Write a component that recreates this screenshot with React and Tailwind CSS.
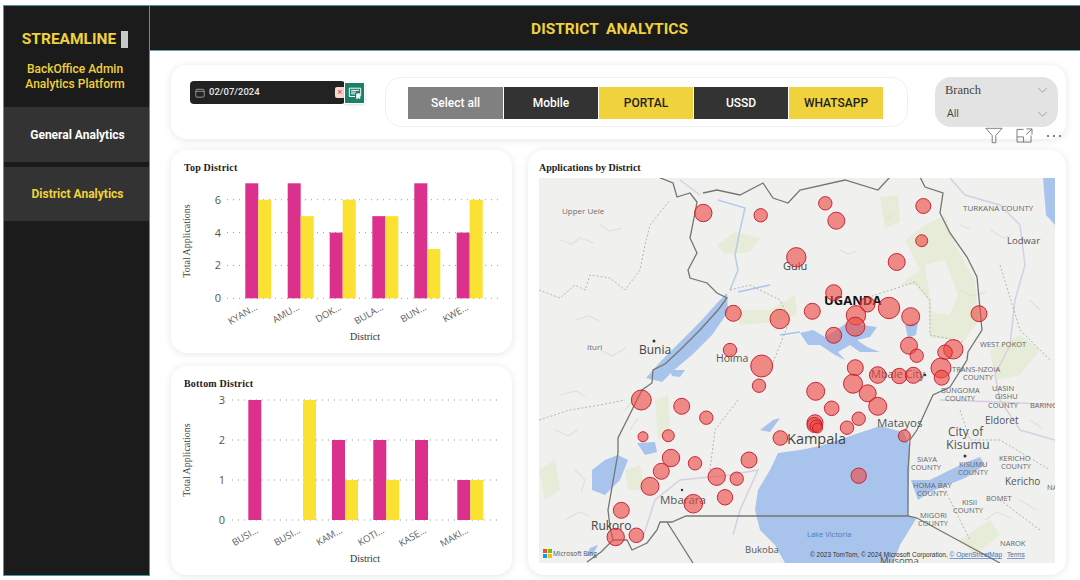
import React from 'react';

const bubbles = [
    [703.3, 213, 8.7], [760.7, 215.3, 6.7], [796.3, 257.3, 9.7], [733.3, 313.3, 8], [779.7, 319, 9.7],
    [730, 350, 6.7], [761.7, 366, 11], [825.3, 203.3, 6.7], [836.3, 220.7, 8.5], [923.3, 206, 7.5],
    [921.7, 240.7, 6], [896.7, 262, 8.5], [833.7, 292.7, 8], [812.3, 311.3, 8], [867.5, 304.5, 7.5],
    [889, 308, 10.7], [856, 315.3, 9.7], [855.3, 326.7, 9.5], [910.7, 316.7, 9], [833.7, 335.3, 8],
    [979, 313.7, 8], [909, 345.7, 8.5], [916.7, 355.7, 6.7], [953.3, 349.3, 9.7], [945, 352.3, 7.3],
    [941, 368, 10], [941.7, 377.7, 7.5], [855.3, 367.7, 8], [877.7, 375, 8.3], [899.3, 376, 7.7],
    [913.3, 375.3, 8], [853, 383.7, 9.5], [867.7, 393.3, 8.5], [877.7, 406.3, 9], [815.7, 391.3, 9],
    [831.7, 408.3, 7.3], [858.7, 418.7, 6.7], [847, 427.7, 6.7], [904.3, 436, 6], [815, 422.7, 8],
    [814.5, 425, 7.5], [816, 426, 6], [817.5, 428, 5], [780.3, 438, 7.3], [706.3, 417.7, 6.7],
    [759, 385.7, 6.7], [641.3, 400, 10], [681.7, 406.3, 8], [643, 436.7, 5], [668.3, 435.7, 6],
    [671, 458, 8.7], [661.3, 471.3, 8], [695, 463.3, 6.7], [650, 486.3, 9], [749, 460, 8],
    [716.7, 476.7, 8.7], [736.7, 478.7, 6.7], [725, 497.3, 7.7], [693.3, 503.7, 9.3], [621.3, 510.3, 8],
    [615.7, 537, 8.7], [636.3, 535.3, 7.3], [858.7, 475.7, 7.7],
];

// [x, baseline y, size, text, colour, weight]
const mapLabels = [
    [562, 214, 8, 'Upper Uele', '#6f6f6f'],
    [587, 350, 8, 'Ituri', '#6f6f6f'],
    [639, 354, 12, 'Bunia', '#444'],
    [716, 362, 10.5, 'Hoima', '#555'],
    [783, 270, 11, 'Gulu', '#444'],
    [824, 305, 13, 'UGANDA', '#111', 700],
    [871, 378, 11, 'Mbale City', '#555'],
    [787, 444, 14.5, 'Kampala', '#444'],
    [877, 427, 11.5, 'Matayos', '#555'],
    [591, 530, 12, 'Rukoro', '#444'],
    [660, 504, 11.5, 'Mbarara', '#555'],
    [745, 553, 9.5, 'Bukoba', '#555'],
    [807, 537, 7.5, 'Lake Victoria', '#4f78b5'],
    [880, 564, 9.5, 'Musoma', '#555'],
    [948, 436, 12, 'City of', '#555'],
    [946, 449, 12.5, 'Kisumu', '#555'],
    [985, 424, 10, 'Eldoret', '#555'],
    [963, 211, 8, 'TURKANA COUNTY', '#666'],
    [1007, 244, 9.5, 'Lodwar', '#555'],
    [980, 347, 7.5, 'WEST POKOT', '#666'],
    [952, 372, 7.5, 'TRANS-NZOIA', '#666'],
    [963, 380, 7.5, 'COUNTY', '#666'],
    [941, 393, 7.5, 'BUNGOMA', '#666'],
    [945, 401, 7.5, 'COUNTY', '#666'],
    [992, 391, 7.5, 'UASIN', '#666'],
    [995, 399, 7.5, 'GISHU', '#666'],
    [988, 408, 7.5, 'COUNTY', '#666'],
    [1030, 408, 7.5, 'BARINGO', '#666'],
    [917, 462, 7.5, 'SIAYA', '#666'],
    [911, 470, 7.5, 'COUNTY', '#666'],
    [959, 467, 7.5, 'KISUMU', '#666'],
    [958, 475, 7.5, 'COUNTY', '#666'],
    [999, 461, 7.5, 'KERICHO', '#666'],
    [1001, 469, 7.5, 'COUNTY', '#666'],
    [1005, 485, 10, 'Kericho', '#555'],
    [913, 488, 7.5, 'HOMA BAY', '#666'],
    [917, 496, 7.5, 'COUNTY', '#666'],
    [986, 501, 7.5, 'BOMET', '#666'],
    [962, 505, 7.5, 'KISII', '#666'],
    [953, 513, 7.5, 'COUNTY', '#666'],
    [920, 518, 7.5, 'MIGORI', '#666'],
    [918, 526, 7.5, 'COUNTY', '#666'],
    [1000, 546, 7.5, 'NAROK', '#666'],
    [1047, 490, 7.5, 'NA', '#666'],
];

const ugandaBorder = 'M658 177 L673 183 L677 197 L690 193 L697 202 L695 213 L690 238 L697 253 L688 270 L690 278 L707 283 L717 293 L727 298 L718 310 L700 330 L680 350 L665 364 L653 370 L652 383 L642 390 L627 420 L618 438 L618 453 L608 510 L610 527 L613 540 L601 552 L587 562 M613 540 L627 540 L632 550 L647 543 L657 530 L660 522 L672 522 L686 516 L908 516 M703 193 L717 190 L740 195 L763 183 L773 198 L788 203 L800 190 L845 180 L878 190 L890 177 M920 177 L925 187 L943 193 L940 213 L950 233 L967 257 L977 277 L982 330 L968 352 L967 360 L950 387 L933 395 L917 430 L910 440 L908 470 L908 516 L917 518 L1000 563 M667 522 L693 563';

const dashedBorders = 'M539 290 L560 298 L575 285 L585 290 L590 275 L610 278 L625 290 L640 270 L645 245 L650 225 L670 200 M539 420 L570 410 L600 405 L625 400 M730 290 L750 285 L780 300 L790 320 L780 345 L770 370 M738 400 L715 430 L710 470 M860 300 L915 282 L930 300 L930 335 L965 342 M1000 265 L1020 330 L1050 360 M960 410 L970 440 L1000 440 L1050 470 M940 480 L970 540 M1000 500 L1040 530';

// faint hill shading strokes
const hillShade = 'M560 240 l12 4 l8 -6 l14 5 M600 225 l10 6 l12 -3 M575 320 l14 -4 l10 5 M600 350 l12 6 l14 -8 M560 395 l16 -4 l9 5 M555 430 l14 6 l8 -6 M575 470 l10 10 l-4 12 M565 520 l14 -8 l10 4 M625 410 l10 -12 l8 -4 M630 430 l8 -12 M990 230 l14 8 l8 -4 M960 290 l12 6 l14 -4 M1030 300 l10 10 M985 520 l12 -8 l14 6 M1020 500 l16 10 M960 225 l10 4 M885 220 l10 -6 M840 250 l8 4 l8 -3 M1030 420 l12 8';

const Bar = ({ x, y0, unit, value, color }) => (
    <rect x={x} y={y0 - value * unit} width="13" height={value * unit} fill={color} />
);

const Chart = ({ title, ticks, y0, unit, gridX, tickX, groups, labels, labelEnds, labelY, titleY, districtY, height, top }) => (
    <div className="bg-white rounded-2xl shadow-[0_1px_8px_rgba(0,0,0,0.1)] pt-[12px]" style={{ height: height }}>
        <div className="px-[13px] h-[12px] leading-[12px] text-[10px] font-bold text-[#222] font-['Liberation_Serif',serif] tracking-[0.2px]">{title}</div>
        <svg viewBox={`171 ${top} 341 ${height - 24}`} className="block w-[341px]" style={{ height: height - 24 }}>
            {ticks.map((t) => (
                <g key={t}>
                    <line x1={gridX[0]} x2={gridX[1]} y1={y0 - t * unit} y2={y0 - t * unit} stroke="#999" strokeWidth="1" strokeDasharray="1 5" />
                    <text x={tickX} y={y0 - t * unit + 4} textAnchor="middle" fontSize="11" fill="#555" fontFamily="'Open Sans', sans-serif">{t}</text>
                </g>
            ))}
            {groups.map(([x, pink, yellow], i) => (
                <g key={i}>
                    {pink > 0 && <Bar x={x} y0={y0} unit={unit} value={pink} color="#db318c" />}
                    {yellow > 0 && <Bar x={x + 13} y0={y0} unit={unit} value={yellow} color="#fae132" />}
                </g>
            ))}
            {labels.map((l, i) => (
                <text key={i} x={labelEnds[i]} y={labelY} textAnchor="end" fontSize="9.5" fill="#5c5c5c" fontFamily="'Open Sans', sans-serif" transform={`rotate(-30 ${labelEnds[i]} ${labelY})`}>{l}</text>
            ))}
            <text x={0} y={0} textAnchor="middle" fontSize="10" fill="#444" fontFamily="'Liberation Serif', serif" transform={`translate(190 ${titleY}) rotate(-90)`}>Total Applications</text>
            <text x={365} y={districtY} textAnchor="middle" fontSize="10" fill="#333" fontFamily="'Liberation Serif', serif">District</text>
        </svg>
    </div>
);

const UgandaMap = () => (
    <svg viewBox="539 178 516 385" className="block w-[516px] h-[385px]">
        <rect x="539" y="178" width="516" height="385" fill="#f0f0ee" />
        {/* parks */}
        <g fill="#e6ecd8">
            <path d="M905 240 L925 225 L945 215 L955 245 L975 280 L978 320 L965 340 L930 338 L928 300 L915 285 L900 285 L920 270 Z" />
            <path d="M880 197 L898 195 L900 222 L885 228 Z" />
            <path d="M717 245 L735 232 L760 238 L750 252 L725 254 Z" />
            <path d="M737 310 L770 310 L795 295 L797 315 L775 322 L740 325 Z" />
            <path d="M655 400 L668 395 L670 430 L658 440 Z" />
            <path d="M625 470 L640 465 L645 490 L628 490 Z" />
            <path d="M990 350 L1020 335 L1040 350 L1020 375 L995 380 Z" />
            <path d="M960 540 L990 520 L1000 535 L975 555 Z" />
            <path d="M539 470 L555 460 L560 490 L545 500 Z" />
        </g>
        <path d="M925 265 L945 260 L958 295 L950 315 L932 312 Z" fill="#f0f0ee" />
        <path d={hillShade} fill="none" stroke="#e0e0dc" strokeWidth="1.2" />
        {/* kenya and tanzania boundaries */}
        <path d="M680 180 L700 195 M950 178 L965 195 L1000 205 L1020 225 L1025 265 L1015 300 L1010 345 L995 375 L1000 400 L1020 430 L1055 440 M940 400 L1000 402 L1055 405" fill="none" stroke="#d8cfe2" strokeWidth="1.5" />
        <path d="M642 540 L655 500 L680 480 L730 475 L758 470 L740 510 L733 535" fill="none" stroke="#d8cfe2" strokeWidth="1.5" />
        {/* lakes */}
        <g fill="#a8c4ec">
            <path d="M727 293 L728 312 L712 335 L692 355 L674 370 L662 382 L646 378 L662 360 L680 342 L700 322 L718 302 Z" />
            <path d="M778 453 L770 470 L758 490 L755 510 L760 530 L775 545 L785 563 L893 563 L900 545 L916 519 L908 515 L910 445 L903 432 L880 426 L850 436 L820 446 L800 450 Z" />
            <path d="M911 480 L930 480 L950 470 L967 462 L980 457 L985 465 L965 478 L945 486 L930 492 L918 500 Z" />
            <path d="M618 455 L628 460 L620 480 L605 495 L592 490 L592 470 L605 460 Z" />
            <path d="M800 333 L813 330 L825 337 L847 323 L877 327 L870 337 L857 340 L867 347 L880 352 L860 352 L850 345 L838 352 L845 360 L835 355 L820 345 L808 345 Z" />
            <path d="M905 325 L918 322 L916 335 L908 338 Z" />
            <path d="M637 443 L655 442 L657 452 L645 455 Z" />
            <path d="M773 420 L780 418 L770 432 L760 430 Z" />
            <path d="M1043 178 L1055 178 L1055 225 L1046 215 Z" />
            <path d="M670 370 L685 370 L680 377 L672 376 Z" />
            <path d="M590 548 L598 545 L592 556 L586 556 Z" />
        </g>
        <path d="M718 200 L745 208 L740 230 L735 255 L738 270 L730 290" fill="none" stroke="#b5cce9" strokeWidth="1.5" />
        <path d="M738 292 L770 285 M780 335 L800 332" fill="none" stroke="#a8c4ec" strokeWidth="1.5" />
        <path d={dashedBorders} fill="none" stroke="#a3a3a0" strokeWidth="0.8" strokeDasharray="2 2" />
        <path d={ugandaBorder} fill="none" stroke="#757573" strokeWidth="1.3" />
        {mapLabels.map(([x, y, size, text, color, weight]) => (
            <text key={text + x} x={x} y={y} fontSize={size} fill={color} fontWeight={weight || 400} fontFamily="'Open Sans', sans-serif">{text}</text>
        ))}
        <circle cx="654" cy="341" r="1.5" fill="#333" />
        <circle cx="925" cy="375" r="1.3" fill="#333" />
        <circle cx="965" cy="456" r="1.5" fill="#333" />
        <circle cx="682" cy="490" r="1.2" fill="#333" />
        {bubbles.map(([cx, cy, r], i) => (
            <circle key={i} cx={cx} cy={cy} r={r} fill="#ee4a44" fillOpacity="0.62" stroke="#c2182b" strokeWidth="0.9" />
        ))}
        {/* bing logo */}
        <rect x="543" y="549" width="4" height="4" fill="#f25022" />
        <rect x="548" y="549" width="4" height="4" fill="#7fba00" />
        <rect x="543" y="554" width="4" height="4" fill="#00a4ef" />
        <rect x="548" y="554" width="4" height="4" fill="#ffb900" />
        <text x="553" y="556" fontSize="6.5" fill="#555" fontFamily="'Open Sans', sans-serif">Microsoft Bing</text>
        <text x="810" y="557" fontSize="6.5" fill="#333" fontFamily="'Liberation Sans', sans-serif">© 2023 TomTom, © 2024 Microsoft Corporation, <tspan fill="#3b6fb5" textDecoration="underline">© OpenStreetMap</tspan><tspan dx="5" fill="#3b6fb5" textDecoration="underline">Terms</tspan></text>
    </svg>
);

const buttons = [
    { label: 'Select all', cls: 'bg-[#808080] text-white w-[95px]' },
    { label: 'Mobile', cls: 'bg-[#333333] text-white w-[94px]' },
    { label: 'PORTAL', cls: 'bg-[#f0d23c] text-[#222] w-[94px]' },
    { label: 'USSD', cls: 'bg-[#333333] text-white w-[94px]' },
    { label: 'WHATSAPP', cls: 'bg-[#f0d23c] text-[#222] w-[94px]' },
];

const Chevron = () => (
    <svg viewBox="0 0 12 8" className="w-[11px] h-[7px]" fill="none" stroke="#9a9a9a" strokeWidth="1"><path d="M1 1 L6 6 L11 1" /></svg>
);

const App = () => {
    return (
        <div className="w-[1080px] h-[580px] bg-white flex pt-[5px] pl-[3px] overflow-hidden font-['Roboto',sans-serif]">
            {/* Sidebar */}
            <div className="w-[147px] h-[571px] shrink-0 bg-[#1b1b1b] border border-[#4f95a8]">
                <div className="h-[101px] pt-[23px] flex flex-col items-center text-[#f0d23c]">
                    <div className="flex items-center gap-[5px] pr-[3px]">
                        <span className="text-[15.5px] leading-[20px] font-bold">STREAMLINE</span>
                        <span className="w-[7px] h-[17px] bg-[#c9c9c9]"></span>
                    </div>
                    <div className="mt-[13px] pr-[3px] text-[12px] leading-[15px] font-medium text-center">BackOffice Admin<br />Analytics Platform</div>
                </div>
                <div className="h-[55px] bg-[#333333] flex items-center justify-center text-white text-[12px] font-bold pl-[2px]">General Analytics</div>
                <div className="h-[54px] mt-[5px] bg-[#333333] flex items-center justify-center text-[#f0d23c] text-[12px] font-bold pl-[2px]">District Analytics</div>
            </div>

            {/* Main */}
            <div className="flex-1 min-w-0 flex flex-col">
                <div className="h-[46px] shrink-0 bg-[#1b1b1b] border-t border-b border-t-[#4f95a8] border-b-[#5fa3b5] flex items-center justify-center text-[#f0d23c] text-[15.5px] font-bold pr-[11px] pt-[4px] whitespace-pre">DISTRICT  ANALYTICS</div>

                <div className="flex-1 pl-[21px] pr-[14px] pt-[14px]">
                    {/* Filters */}
                    <div className="relative h-[74px] bg-white rounded-2xl shadow-[0_1px_8px_rgba(0,0,0,0.1)] flex items-start pl-[19px] pt-[12px]">
                        <div className="relative mt-[4px] w-[155px] h-[23px] bg-[#222222] rounded-[4px] flex items-center pl-[5px] gap-[4px] text-[#e8e8e8] text-[9.5px] font-medium">
                            <svg viewBox="0 0 12 12" className="w-[10px] h-[10px]" fill="none" stroke="#aaa" strokeWidth="1"><rect x="1" y="1.5" width="10" height="9.5" rx="1.5" /><path d="M1 4 H11" /></svg>
                            02/07/2024
                            <span className="absolute right-0 top-[6px] w-[10px] h-[11px] bg-[#f4d6d2] rounded-l-[2px] text-[#e0584f] text-[9px] leading-[11px] text-center">×</span>
                            <span className="absolute left-[154px] top-[1px] w-[21px] h-[22px] bg-[#1c7f6c] border border-white shadow flex items-center justify-center">
                                <svg viewBox="0 0 16 16" className="w-[14px] h-[14px]" fill="none" stroke="white" strokeWidth="1.1"><path d="M1.5 2.5 H14.5 V11 H11 M8 12 H1.5 V2.5" /><path d="M3.5 5 H12.5 M3.5 7 H9 M3.5 9 H8" /><path d="M10 9 H13.5 V14.5 L11.75 13.2 L10 14.5 Z" fill="white" /></svg>
                            </span>
                        </div>

                        <div className="ml-[40px] w-[523px] h-[50px] rounded-2xl border border-[#f0f0f0] flex items-center gap-[1px] pl-[22px] pt-[1px]">
                            {buttons.map((b) => (
                                <div key={b.label} className={`h-[32px] flex items-center justify-center text-[12px] font-medium ${b.cls}`}>{b.label}</div>
                            ))}
                        </div>

                        <div className="ml-[27px] w-[123px] h-[50px] rounded-2xl bg-[#e3e3e3] pl-[10px] pr-[10px] pt-[5px] relative">
                            <div className="flex items-center justify-between h-[17px]">
                                <span className="font-['Liberation_Serif',serif] text-[12.5px] text-[#444]">Branch</span>
                                <Chevron />
                            </div>
                            <div className="flex items-center justify-between h-[20px] mt-[5px] pl-[2px]">
                                <span className="text-[10.5px] text-[#444] font-['Open_Sans',sans-serif]">All</span>
                                <Chevron />
                            </div>
                        </div>

                        {/* Visual header icons */}
                        <div className="absolute right-[4px] top-[62px] flex items-center gap-[13px]">
                            <svg viewBox="0 0 20 18" className="w-[18px] h-[17px]" fill="none" stroke="#666" strokeWidth="0.9"><path d="M1 1 H19 L12 9 V17 H8 V9 Z" /></svg>
                            <svg viewBox="0 0 18 16" className="w-[17px] h-[15px]" fill="none" stroke="#666" strokeWidth="0.9"><path d="M8 1.5 H1 V15 H16 V8 M1 9.5 H8 V15 M11 1 H17 V7 M17 1 L11 7" /></svg>
                            <svg viewBox="0 0 16 4" className="w-[16px] h-[4px]" fill="#666"><circle cx="2" cy="2" r="1.1" /><circle cx="8" cy="2" r="1.1" /><circle cx="14" cy="2" r="1.1" /></svg>
                        </div>
                    </div>

                    {/* Charts and map */}
                    <div className="flex gap-[16px] mt-[11px]">
                        <div className="w-[341px] shrink-0 flex flex-col gap-[13px]">
                            <Chart
                                title="Top District"
                                height={203}
                                top={174}
                                ticks={[0, 2, 4, 6]}
                                y0={298.3}
                                unit={16.43}
                                gridX={[227, 499]}
                                tickX={218}
                                groups={[[245.3, 7, 6], [287.7, 7, 5], [329.7, 4, 6], [372.3, 5, 5], [414.3, 7, 3], [456.7, 4, 6]]}
                                labels={['KYAN...', 'AMU...', 'DOK...', 'BULA...', 'BUN...', 'KWE...']}
                                labelEnds={[258, 300, 342, 384, 427, 469]}
                                labelY={309}
                                titleY={241}
                                districtY={340}
                            />
                            <Chart
                                title="Bottom District"
                                height={209}
                                top={390}
                                ticks={[0, 1, 2, 3]}
                                y0={520}
                                unit={40}
                                gridX={[232, 502]}
                                tickX={222}
                                groups={[[248.3, 3, 0], [290, 0, 3], [332, 2, 1], [373.3, 2, 1], [415, 2, 0], [457.3, 1, 1]]}
                                labels={['BUSI...', 'BUSI...', 'KAM...', 'KOTI...', 'KASE...', 'MAKI...']}
                                labelEnds={[259, 301, 343, 385, 427, 469]}
                                labelY={532}
                                titleY={460}
                                districtY={562}
                            />
                        </div>
                        <div className="w-[538px] h-[425px] bg-white rounded-2xl shadow-[0_1px_8px_rgba(0,0,0,0.1)] pt-[12px] px-[11px]">
                            <div className="h-[16px] leading-[12px] text-[10px] font-bold text-[#222] font-['Liberation_Serif',serif]">Applications by District</div>
                            <UgandaMap />
                        </div>
                    </div>
                </div>
            </div>
        </div>
    );
};

export default App;
